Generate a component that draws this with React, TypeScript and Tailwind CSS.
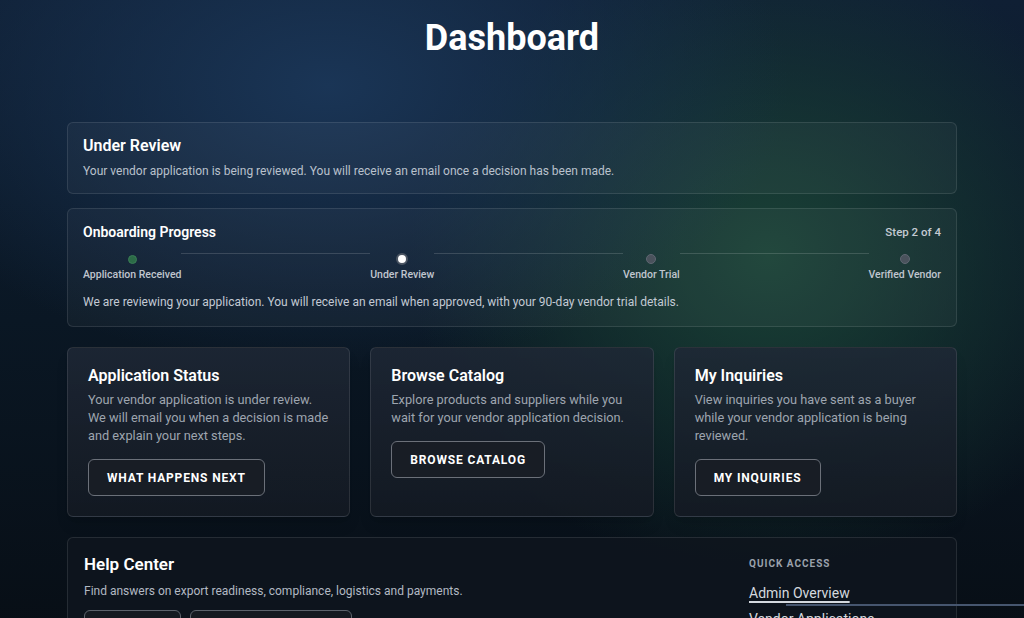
import React from "react";

const steps = [
  { label: "Application Received", state: "done" },
  { label: "Under Review", state: "current" },
  { label: "Vendor Trial", state: "todo" },
  { label: "Verified Vendor", state: "todo" },
];

function Dot({ state }: { state: string }) {
  if (state === "done")
    return <span className="block h-[9px] w-[9px] rounded-full bg-[#2c6b47] border border-[#3a7d56]" />;
  if (state === "current")
    return <span className="block h-[12px] w-[12px] rounded-full bg-white border-2 border-[#4b5563]" />;
  return <span className="block h-[10px] w-[10px] rounded-full bg-[#4a525c] border border-[#5f6772]" />;
}

function ActionCard({ title, text, button }: { title: string; text: string; button: string }) {
  return (
    <div className="rounded-md border border-white/10 bg-linear-to-b from-[#1f2836]/85 to-[#141a23]/90 p-5 shadow-lg">
      <h3 className="text-[16px] leading-4 font-semibold text-white">{title}</h3>
      <p className="mt-[7px] text-[12.75px] leading-[18px] text-[#9ea5af]">{text}</p>
      <button className="mt-[14px] h-[37px] rounded-md border-[1.5px] border-[#6b7079] bg-[#181d25] px-[18px] text-[12px] font-bold tracking-[0.07em] text-white">
        {button}
      </button>
    </div>
  );
}

export default function App() {
  return (
    <div
      className="relative min-h-screen w-full overflow-hidden bg-[radial-gradient(ellipse_45%_40%_at_32%_12%,#1a3556_0%,transparent_100%),radial-gradient(ellipse_35%_45%_at_75%_36%,#1a4236_0%,transparent_100%),linear-gradient(180deg,#0f1f34_0%,#0a1724_45%,#070c12_100%)] font-['Roboto',sans-serif] text-white"
    >
      <div className="mx-auto w-[890px] pt-[18px] pb-10">
        <h1 className="text-center text-4xl leading-10 font-bold text-white">Dashboard</h1>

        <div className="mt-16 rounded-md border border-white/10 bg-white/[0.035] px-[15px] pt-[14px] pb-[13px]">
          <h2 className="text-[16px] leading-[18px] font-semibold text-white">Under Review</h2>
          <p className="mt-[7px] text-[12px] leading-[18px] text-[#b9c1cc]">
            Your vendor application is being reviewed. You will receive an email once a decision has been made.
          </p>
        </div>

        <div className="mt-[14px] rounded-md border border-white/10 bg-white/[0.035] px-[15px] pt-[14px] pb-[15px]">
          <div className="flex items-center justify-between">
            <h2 className="text-[14px] leading-[18px] font-semibold text-white">Onboarding Progress</h2>
            <span className="text-[11.5px] leading-[18px] font-medium text-[#c4cad2]">Step 2 of 4</span>
          </div>
          <div className="mt-3 flex items-start">
            {steps.map((s, i) => (
              <React.Fragment key={s.label}>
                {i > 0 && <div className="h-px flex-1 bg-white/15" />}
                <div className="flex flex-col items-center">
                  <div className="flex h-[12px] items-center">
                    <Dot state={s.state} />
                  </div>
                  <span className="mt-[3px] text-[10.5px] leading-[14px] font-medium text-[#c0c6cf]">{s.label}</span>
                </div>
              </React.Fragment>
            ))}
          </div>
          <p className="mt-[11px] text-[12px] leading-[18px] text-[#c3cad4]">
            We are reviewing your application. You will receive an email when approved, with your 90-day vendor trial details.
          </p>
        </div>

        <div className="mt-5 grid grid-cols-3 gap-5">
          <ActionCard
            title="Application Status"
            text="Your vendor application is under review. We will email you when a decision is made and explain your next steps."
            button="WHAT HAPPENS NEXT"
          />
          <ActionCard
            title="Browse Catalog"
            text="Explore products and suppliers while you wait for your vendor application decision."
            button="BROWSE CATALOG"
          />
          <ActionCard
            title="My Inquiries"
            text="View inquiries you have sent as a buyer while your vendor application is being reviewed."
            button="MY INQUIRIES"
          />
        </div>

        <div className="mt-5 flex justify-between rounded-md border border-white/10 bg-[#0e151e]/90 px-4 pt-[14px] pb-6">
          <div>
            <h2 className="text-[17px] leading-6 font-semibold text-white">Help Center</h2>
            <p className="mt-[6px] text-[12px] leading-[18px] text-[#b2b9c3]">
              Find answers on export readiness, compliance, logistics and payments.
            </p>
            <div className="mt-[10px] flex gap-[9px]">
              <button className="h-[37px] rounded-md border-[1.5px] border-[#5d636c] bg-[#151a21] px-[18px] text-[12px] font-bold tracking-[0.07em] text-white">
                VIEW ALL
              </button>
              <button className="h-[37px] rounded-md border-[1.5px] border-[#5d636c] bg-[#151a21] px-[18px] text-[12px] font-bold tracking-[0.07em] text-white">
                CONTACT SUPPORT
              </button>
            </div>
          </div>
          <div className="w-[191px] pt-[5px]">
            <div className="text-[10px] leading-[14px] font-bold tracking-[0.1em] text-[#9aa1ab]">QUICK ACCESS</div>
            <div className="mt-[13px] flex flex-col gap-[8px] text-[14px] leading-[18px] text-[#d4d9df]">
              <a className="w-fit underline decoration-[1.5px] underline-offset-[3px]">Admin Overview</a>
              <a className="w-fit underline decoration-[1.5px] underline-offset-[3px]">Vendor Applications</a>
            </div>
          </div>
        </div>
      </div>
      <div className="absolute top-[604px] left-[786px] right-0 h-[2px] bg-[#46566f]" />
    </div>
  );
}
